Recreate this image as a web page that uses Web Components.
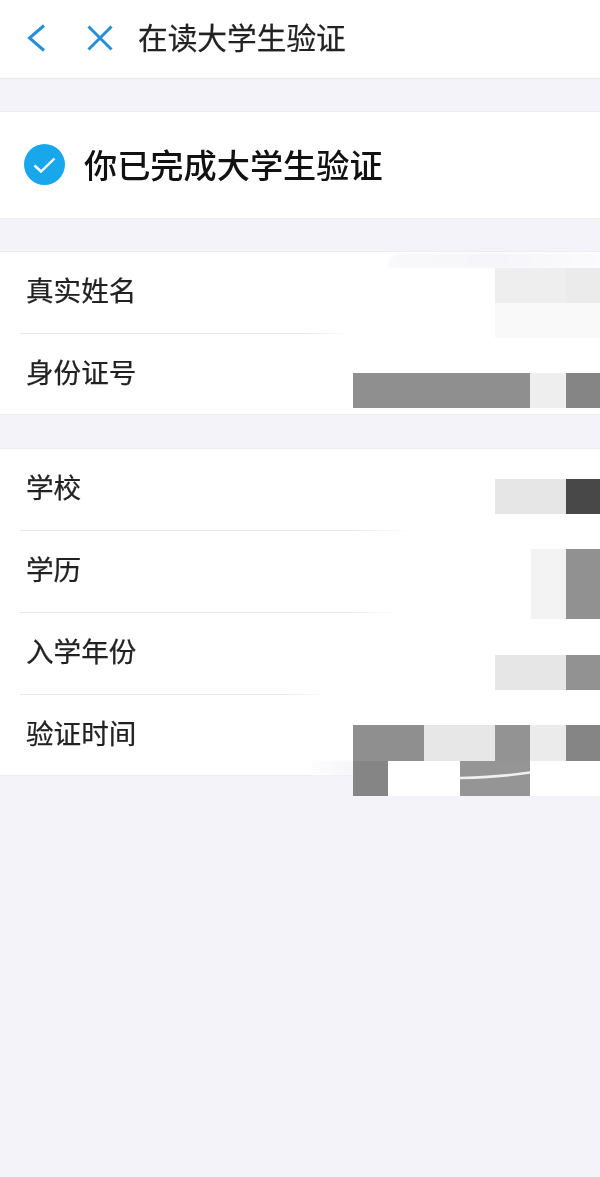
<!DOCTYPE html>
<html lang="zh-CN">
<head>
<meta charset="utf-8">
<title>在读大学生验证</title>
<style>
  html, body { margin: 0; padding: 0; }
  body {
    position: relative;
    width: 600px;
    height: 1177px;
    overflow: hidden;
    background: #f3f3f9;
    font-family: "Noto Sans CJK SC", "Noto Sans", sans-serif;
    color: #222;
  }
</style>
</head>
<body>
<nav-bar>在读大学生验证</nav-bar>
<status-card>你已完成大学生验证</status-card>

<info-group style="margin-top:32px">
  <info-row fade="330">真实姓名</info-row>
  <info-row last>身份证号</info-row>
</info-group>

<info-group style="margin-top:33px">
  <info-row fade="390">学校</info-row>
  <info-row fade="380">学历</info-row>
  <info-row fade="305">入学年份</info-row>
  <info-row last>验证时间</info-row>
</info-group>

<pixel-mosaic></pixel-mosaic>

<script>
// Barra superior con volver, cerrar y título
class NavBar extends HTMLElement {
  constructor() {
    super();
    this.attachShadow({ mode: 'open' });
  }

  connectedCallback() {
    this.shadowRoot.innerHTML = `
      <style>
        :host {
          display: flex;
          align-items: center;
          box-sizing: border-box;
          height: 79px;
          padding: 0 0 5px 26px;
          background: #fff;
          border-bottom: 1px solid #e8e8ea;
        }
        svg { display: block; flex: none; fill: none; stroke: #2490dc; stroke-width: 3; position: relative; top: 1px; }
        .back { width: 22px; height: 30px; margin-right: 37px; }
        .close { width: 30px; height: 30px; margin-right: 23px; }
        span {
          font-size: 29.7px;
          line-height: 40px;
          color: #222;
          -webkit-text-stroke: .25px #222;
          filter: blur(.3px);
        }
      </style>
      <svg class="back" viewBox="0 0 22 30"><path d="M18 2.5 3.5 15 18 27.5"/></svg>
      <svg class="close" viewBox="0 0 30 30"><path d="M3.5 3.5 26.5 26.5M26.5 3.5 3.5 26.5"/></svg>
      <span><slot></slot></span>
    `;
  }
}

// Tarjeta con el estado de la verificación
class StatusCard extends HTMLElement {
  constructor() {
    super();
    this.attachShadow({ mode: 'open' });
  }

  connectedCallback() {
    this.shadowRoot.innerHTML = `
      <style>
        :host {
          display: flex;
          align-items: center;
          box-sizing: border-box;
          height: 108px;
          margin-top: 32px;
          padding: 0 0 2px 24px;
          background: #fff;
          border-top: 1px solid #ededf0;
          border-bottom: 1px solid #ededf0;
        }
        svg { display: block; width: 41px; height: 41px; margin-right: 19px; flex: none; }
        span {
          font-size: 33.2px;
          font-weight: 500;
          line-height: 44px;
          color: #111;
          filter: blur(.3px);
        }
      </style>
      <svg viewBox="0 0 41 41">
        <circle cx="20.5" cy="20.5" r="20.5" fill="#19a7ec"/>
        <path d="M10.5 21.5 17 27.5 30.5 14.5" fill="none" stroke="#fff" stroke-width="2.4"/>
      </svg>
      <span><slot></slot></span>
    `;
  }
}

// Grupo de filas con borde superior e inferior
class InfoGroup extends HTMLElement {
  constructor() {
    super();
    this.attachShadow({ mode: 'open' });
  }

  connectedCallback() {
    this.shadowRoot.innerHTML = `
      <style>
        :host {
          display: block;
          background: #fff;
          border-top: 1px solid #ededf0;
          border-bottom: 1px solid #ededf0;
        }
      </style>
      <slot></slot>
    `;
  }
}

// Fila con etiqueta; el separador se desvanece hacia la derecha
class InfoRow extends HTMLElement {
  constructor() {
    super();
    this.attachShadow({ mode: 'open' });
  }

  connectedCallback() {
    const fade = this.getAttribute('fade') || 330;
    const last = this.hasAttribute('last');
    this.shadowRoot.innerHTML = `
      <style>
        :host { display: block; }
        .label {
          display: flex;
          align-items: center;
          box-sizing: border-box;
          height: ${last ? 80 : 81}px;
          padding: 0 0 ${last ? 7 : 8}px 26px;
          font-size: 27.6px;
          line-height: 38px;
          color: #222;
        }
        .label span { -webkit-text-stroke: .25px #222; filter: blur(.3px); }
        .sep {
          height: 1px;
          margin-left: 20px;
          width: ${fade}px;
          background: linear-gradient(to right, #e8e8ea 85%, #fff);
        }
      </style>
      <div class="label"><span><slot></slot></span></div>
      ${last ? '' : '<div class="sep"></div>'}
    `;
  }
}

// Bloques pixelados que tapan los datos personales, encima de las filas
class PixelMosaic extends HTMLElement {
  constructor() {
    super();
    this.attachShadow({ mode: 'open' });
  }

  connectedCallback() {
    // x, y, ancho, alto, color
    const bloques = [
      [495, 268, 71, 35, '#eeeeee'],
      [566, 268, 34, 35, '#ebebeb'],
      [495, 303, 105, 35, '#f9f9f9'],
      [353, 373, 177, 35, '#8f8f8f'],
      [530, 373, 36, 35, '#eeeeee'],
      [566, 373, 34, 35, '#858585'],
      [495, 479, 71, 35, '#e6e6e6'],
      [566, 479, 34, 35, '#484848'],
      [531, 549, 35, 70, '#f3f3f3'],
      [566, 549, 34, 70, '#919191'],
      [495, 655, 71, 35, '#e6e6e6'],
      [566, 655, 34, 35, '#929292'],
      [353, 725, 71, 36, '#8f8f8f'],
      [424, 725, 71, 36, '#e7e7e7'],
      [495, 725, 35, 36, '#939393'],
      [530, 725, 36, 36, '#ebebeb'],
      [566, 725, 34, 36, '#858585'],
      [353, 761, 35, 35, '#858585'],
      [388, 761, 72, 35, '#ffffff'],
      [460, 761, 70, 35, '#959595'],
      [530, 761, 70, 35, '#ffffff'],
    ];
    const celdas = bloques.map(([x, y, w, h, c]) =>
      `<i style="left:${x}px;top:${y}px;width:${w}px;height:${h}px;background:${c}"></i>`
    ).join('');
    this.shadowRoot.innerHTML = `
      <style>
        :host { display: block; position: absolute; inset: 0; pointer-events: none; }
        i { position: absolute; display: block; filter: blur(.4px); }
        .top {
          left: 388px; top: 253px; width: 212px; height: 15px;
          border-radius: 12px 0 0 0;
          background: linear-gradient(to right, #f9f9fb, #f6f6fa 50%, #fbfbfd);
          filter: blur(1px);
        }
        .bottom {
          left: 312px; top: 761px; width: 41px; height: 14px;
          background: linear-gradient(to right, #fdfdfe, #f6f6fa);
          filter: blur(1px);
        }
        svg { position: absolute; left: 460px; top: 761px; filter: blur(.6px); }
      </style>
      <i class="top"></i>
      <i class="bottom"></i>
      ${celdas}
      <svg width="70" height="35" viewBox="0 0 70 35">
        <path d="M0 17C22 16.5 48 15 70 11.5" fill="none" stroke="#f0f0f0" stroke-width="2.6"/>
      </svg>
    `;
  }
}

// Registro de los componentes
customElements.define('nav-bar', NavBar);
customElements.define('status-card', StatusCard);
customElements.define('info-group', InfoGroup);
customElements.define('info-row', InfoRow);
customElements.define('pixel-mosaic', PixelMosaic);
</script>
</body>
</html>
